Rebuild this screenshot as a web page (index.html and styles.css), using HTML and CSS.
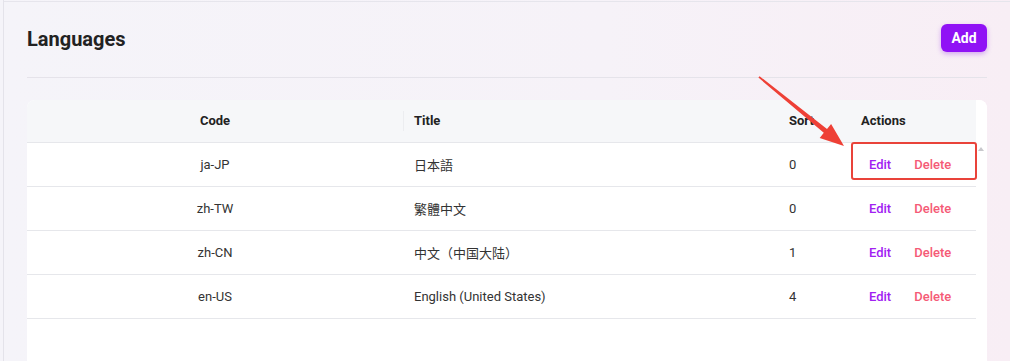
FILE: index.html
```html
<!DOCTYPE html>
<html lang="en">
<head>
<meta charset="utf-8">
<title>Languages</title>
<link rel="stylesheet" href="styles.css">
</head>
<body>
<div class="frame">
  <div class="page">
    <header class="page-head">
      <h1 class="page-title">Languages</h1>
      <button class="btn-add">Add</button>
    </header>
    <hr class="divider">
    <div class="card">
      <div class="table-wrap">
        <table class="grid">
          <colgroup>
            <col class="c-code"><col class="c-title"><col class="c-sort"><col class="c-actions">
          </colgroup>
          <thead>
            <tr>
              <th class="center">Code</th>
              <th class="sep">Title</th>
              <th>Sort</th>
              <th>Actions</th>
            </tr>
          </thead>
          <tbody>
            <tr><td class="center">ja-JP</td><td>日本語</td><td>0</td><td class="acts"><span class="edit">Edit</span><span class="del">Delete</span></td></tr>
            <tr><td class="center">zh-TW</td><td>繁體中文</td><td>0</td><td class="acts"><span class="edit">Edit</span><span class="del">Delete</span></td></tr>
            <tr><td class="center">zh-CN</td><td>中文（中国大陆）</td><td>1</td><td class="acts"><span class="edit">Edit</span><span class="del">Delete</span></td></tr>
            <tr><td class="center">en-US</td><td>English (United States)</td><td>4</td><td class="acts"><span class="edit">Edit</span><span class="del">Delete</span></td></tr>
          </tbody>
        </table>
        <div class="scrollbar"><span class="scroll-up"></span></div>
      </div>
    </div>
  </div>
  <div class="note-box"></div>
  <svg class="note-arrow" width="100" height="80" viewBox="0 0 100 80">
    <polygon points="3.4,2.6 68.8,57.8 64.7,62.9 89,71 76.1,48.9 72.0,54.0 4.6,1.2" fill="#ee4036"/>
  </svg>
</div>
</body>
</html>
```
FILE: styles.css
```css
* { box-sizing: border-box; }
html, body { margin: 0; padding: 0; }
body {
  width: 1010px;
  height: 361px;
  overflow: hidden;
  font-family: Roboto, "Noto Sans CJK SC", "Liberation Sans", sans-serif;
  color: #262626;
  background: linear-gradient(90deg, #f5f4f9 0%, #f6f2f8 60%, #f8eef5 100%);
}
.frame {
  position: relative;
  height: 361px;
  margin-left: 3px;
  border-left: 1px solid #e4e3ea;
  padding-top: 1px;
}
.frame::before {
  content: "";
  position: absolute;
  left: 0; right: 0; top: 1px;
  height: 1px;
  background: #e6e5ec;
}
.page {
  padding: 22px 23px 0 23px;
}
.page-head {
  display: flex;
  align-items: center;
  justify-content: space-between;
  height: 30px;
}
.page-title {
  margin: 0;
  font-size: 20px;
  font-weight: 700;
  color: #222;
  line-height: 30px;
  padding-top: 2px;
}
.btn-add {
  width: 46px;
  height: 28px;
  border: none;
  border-radius: 6px;
  background: #9012f5;
  color: #fff;
  font-family: inherit;
  font-size: 14px;
  font-weight: 700;
  box-shadow: 0 2px 5px rgba(140, 30, 230, 0.35);
  padding: 0;
}
.divider {
  margin: 24px 0 0 0;
  border: none;
  border-top: 1px solid #e5e3ea;
  height: 0;
}
.card {
  margin-top: 22px;
  background: #fff;
  border-radius: 8px 8px 0 0;
  height: 261px;
  overflow: hidden;
}
.table-wrap {
  display: flex;
}
.grid {
  width: 949px;
  border-collapse: collapse;
  font-size: 13px;
  table-layout: fixed;
}
.c-code { width: 376px; }
.c-title { width: 375px; }
.c-sort { width: 72px; }
.c-actions { width: 126px; }
.grid thead tr { background: #f6f7f9; }
.grid th {
  height: 42px;
  font-weight: 700;
  text-align: left;
  padding: 0 11px;
  color: #222;
  border-bottom: 1px solid #e6e7eb;
}
.grid th.center, .grid td.center { text-align: center; }
.grid th.sep {
  position: relative;
}
.grid th.sep::before {
  content: "";
  position: absolute;
  left: 0; top: 11px;
  width: 1px; height: 20px;
  background: #ecedf0;
}
.grid td {
  height: 44px;
  padding: 0 11px;
  border-bottom: 1px solid #e6e7eb;
  color: #333;
}
.grid td.acts {
  padding: 0 0 0 19px;
  font-weight: 500;
}
.edit { color: #a121f2; margin-right: 23px; }
.del { color: #f55a76; }
.scrollbar {
  width: 11px;
  background: #fff;
  position: relative;
}
.scroll-up {
  position: absolute;
  left: 2px; top: 47px;
  width: 0; height: 0;
  border-left: 3px solid transparent;
  border-right: 3px solid transparent;
  border-bottom: 4px solid #c8c8cc;
}
.note-box {
  position: absolute;
  left: 847px;
  top: 142px;
  width: 126px;
  height: 38px;
  border: 2px solid #e9433a;
  border-radius: 3px;
}
.note-arrow {
  position: absolute;
  left: 751px;
  top: 75px;
}
```
